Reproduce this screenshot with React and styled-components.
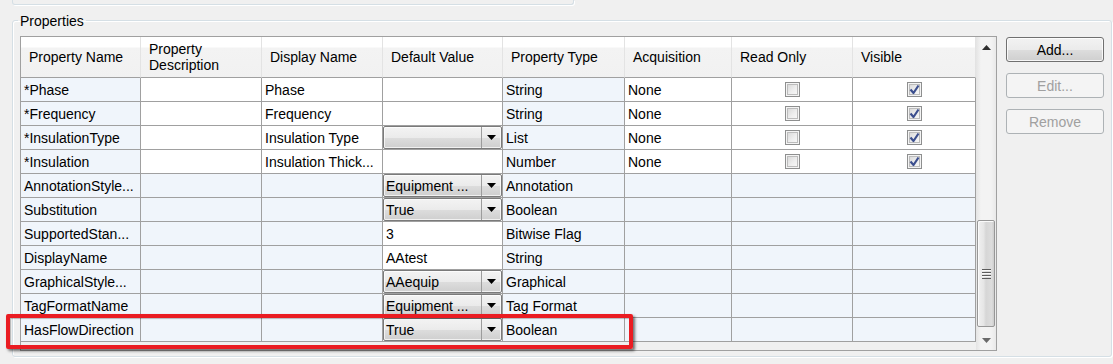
import React from "react";
import styled, { createGlobalStyle, css } from "styled-components";

const GlobalStyle = createGlobalStyle`
  html, body {
    margin: 0;
    padding: 0;
    background: #f0f0f0;
  }
`;

const Root = styled.div`
  position: relative;
  width: 1113px;
  height: 364px;
  overflow: hidden;
  background: #f0f0f0;
  font-family: "Liberation Sans", Arial, sans-serif;
  font-size: 14px;
  color: #000;
`;

const TopBox = styled.div`
  margin-left: 12px;
  width: 560px;
  height: 4px;
  border: 1px solid #d5dfe5;
  border-top: none;
  border-radius: 0 0 3px 3px;
  box-shadow: 1px 1px 0 #fff;
`;

const GroupBox = styled.fieldset`
  margin: 6px 1px 0 12px;
  padding: 7px 7px 5px 7px;
  border: 1px solid #d5dfe5;
  border-radius: 3px;
  min-width: 0;
  box-shadow: inset 1px 1px 0 #fff, 1px 1px 0 #fff;
`;

const Legend = styled.legend`
  margin-left: -2px;
  padding: 2px 2px 0;
  line-height: 16px;
  font-size: 14px;
  color: #000;
`;

const Body = styled.div`
  display: flex;
  align-items: flex-start;
`;

const GridControl = styled.div`
  display: flex;
  width: 977px;
  height: 315px;
  box-sizing: border-box;
  border: 1px solid #a0a0a0;
`;

const TableArea = styled.div`
  flex: 1;
  background: #f0f0f0;
`;

const Grid = styled.div`
  display: grid;
  grid-template-columns: 120px 121px 121px 120px 122px 107px 121px 123px;
  grid-template-rows: 41px;
  grid-auto-rows: 24px;
`;

const HeadCell = styled.div`
  display: flex;
  align-items: center;
  box-sizing: border-box;
  padding: 0 6px 0 8px;
  line-height: 16px;
  background: linear-gradient(#ffffff 0, #ffffff 10px, #f3f3f3 11px, #f1f1f1 100%);
  border-right: 1px solid #e3e3e3;
  border-bottom: 1px solid #a0a0a0;
  &:last-child {
    border-right-color: #a0a0a0;
  }
`;

const Cell = styled.div`
  display: flex;
  align-items: center;
  box-sizing: border-box;
  padding: 0 2px 0 3px;
  white-space: nowrap;
  overflow: hidden;
  background: ${p => (p.$blue ? "#f0f5fb" : "#ffffff")};
  border-right: 1px solid #a0a0a0;
  border-bottom: 1px solid #a0a0a0;
  ${p =>
    p.$center &&
    css`
      justify-content: center;
      padding: 0;
    `}
  ${p =>
    p.$fill &&
    css`
      padding: 0;
      align-items: stretch;
    `}
`;

const Combo = styled.div`
  flex: 1;
  display: flex;
  box-sizing: border-box;
  border: 1px solid #7a7a7a;
  border-radius: 2px;
  background: linear-gradient(#f3f3f3 0%, #ebebeb 50%, #dddddd 51%, #cfcfcf 100%);
  box-shadow: inset 0 0 0 1px rgba(255, 255, 255, 0.7);
`;

const ComboText = styled.span`
  flex: 1;
  display: flex;
  align-items: center;
  padding-left: 2px;
`;

const ComboButton = styled.span`
  width: 19px;
  display: flex;
  align-items: center;
  justify-content: center;
  border-left: 1px solid #9c9c9c;
`;

const Check = styled.span`
  width: 15px;
  height: 15px;
  box-sizing: border-box;
  border: 1px solid #8e8f8f;
  background: linear-gradient(135deg, #d3d3d3 0%, #eeeeee 55%, #fbfbfb 100%);
  box-shadow: inset 0 0 0 1px #f4f4f4, inset 0 0 0 2px #bcbcbc;
  display: flex;
  align-items: center;
  justify-content: center;
`;

const ScrollBar = styled.div`
  width: 20px;
  display: flex;
  flex-direction: column;
  background: linear-gradient(to right, #e4e4e4 0%, #f3f3f3 25%, #f3f3f3 75%, #e9e9e9 100%);
`;

const ArrowButton = styled.div`
  height: 20px;
  display: flex;
  align-items: center;
  justify-content: center;
`;

const Track = styled.div`
  flex: 1;
  display: flex;
  flex-direction: column;
`;

const Thumb = styled.div`
  margin: 163px 1px 0 1px;
  height: 107px;
  box-sizing: border-box;
  border: 1px solid #979797;
  border-radius: 2px;
  background: linear-gradient(to right, #f0f0f0 0%, #e6e6e6 35%, #d6d6d6 50%, #dddddd 85%, #cdcdcd 100%);
  box-shadow: inset 1px 1px 0 #fafafa;
  display: flex;
  align-items: center;
  justify-content: center;
`;

const ButtonCol = styled.div`
  display: flex;
  flex-direction: column;
  gap: 11px;
  margin-left: 9px;
  padding-top: 1px;
  width: 98px;
`;

const Button = styled.div`
  height: 25px;
  box-sizing: border-box;
  border-radius: 3px;
  display: flex;
  align-items: center;
  justify-content: center;
  border: 1px solid #707070;
  background: linear-gradient(#f2f2f2 0%, #ebebeb 50%, #dddddd 51%, #cfcfcf 100%);
  box-shadow: inset 0 0 0 1px rgba(255, 255, 255, 0.8);
  color: #000;
  ${p =>
    p.$disabled &&
    css`
      border-color: #adb2b5;
      background: #f4f4f4;
      box-shadow: none;
      color: #a0a0a0;
    `}
`;

const Highlight = styled.div`
  position: absolute;
  left: 6px;
  top: 314px;
  width: 627px;
  height: 35px;
  box-sizing: border-box;
  border: 4px solid #ea1c22;
  border-radius: 2px;
  box-shadow: 2px 2px 3px rgba(0, 0, 0, 0.55), inset 1px 1px 1px rgba(0, 0, 0, 0.25);
`;

const DownArrow = ({ color = "#000" }) => (
  <svg width="9" height="5" viewBox="0 0 9 5">
    <polygon points="0,0 9,0 4.5,5" fill={color} />
  </svg>
);

const CheckMark = () => (
  <svg width="11" height="11" viewBox="0 0 11 11">
    <path d="M1.5 5.5 L4.5 9 L9.5 1.5" fill="none" stroke="#3c4f8e" strokeWidth="2.2" strokeLinejoin="round" />
  </svg>
);

const Grip = () => (
  <svg width="9" height="10" viewBox="0 0 9 10">
    {[0, 3, 6, 9].map(y => (
      <rect key={y} x="0" y={y} width="9" height="1" fill="#5c5c5c" />
    ))}
    {[1, 4, 7].map(y => (
      <rect key={y} x="0" y={y} width="9" height="1" fill="#f8f8f8" />
    ))}
  </svg>
);

const columns = [
  "Property Name",
  "Property Description",
  "Display Name",
  "Default Value",
  "Property Type",
  "Acquisition",
  "Read Only",
  "Visible",
];

const rows = [
  { name: "*Phase", display: "Phase", def: { text: "" }, type: "String", acq: "None", ro: false, vis: true },
  { name: "*Frequency", display: "Frequency", def: { text: "" }, type: "String", acq: "None", ro: false, vis: true },
  { name: "*InsulationType", display: "Insulation Type", def: { combo: "" }, type: "List", acq: "None", ro: false, vis: true },
  { name: "*Insulation", display: "Insulation Thick...", def: { text: "" }, type: "Number", acq: "None", ro: false, vis: true },
  { name: "AnnotationStyle...", def: { combo: "Equipment ..." }, type: "Annotation" },
  { name: "Substitution", def: { combo: "True" }, type: "Boolean" },
  { name: "SupportedStan...", def: { text: "3" }, type: "Bitwise Flag" },
  { name: "DisplayName", def: { text: "AAtest" }, type: "String" },
  { name: "GraphicalStyle...", def: { combo: "AAequip" }, type: "Graphical" },
  { name: "TagFormatName", def: { combo: "Equipment ..." }, type: "Tag Format" },
  { name: "HasFlowDirection", def: { combo: "True" }, type: "Boolean" },
];

const CheckBox = ({ checked }) => <Check>{checked && <CheckMark />}</Check>;

const DataRow = ({ row }) => {
  const editable = row.name.startsWith("*");
  const other = !editable;
  return (
    <>
      <Cell $blue>{row.name}</Cell>
      <Cell $blue={other}></Cell>
      <Cell $blue={other}>{row.display}</Cell>
      {row.def.combo !== undefined ? (
        <Cell $fill>
          <Combo>
            <ComboText>{row.def.combo}</ComboText>
            <ComboButton>
              <DownArrow />
            </ComboButton>
          </Combo>
        </Cell>
      ) : (
        <Cell>{row.def.text}</Cell>
      )}
      <Cell $blue>{row.type}</Cell>
      <Cell $blue={other}>{row.acq}</Cell>
      <Cell $blue={other} $center>
        {editable && <CheckBox checked={row.ro} />}
      </Cell>
      <Cell $blue={other} $center>
        {editable && <CheckBox checked={row.vis} />}
      </Cell>
    </>
  );
};

const App = () => (
  <Root>
    <GlobalStyle />
    <TopBox />
    <GroupBox>
      <Legend>Properties</Legend>
      <Body>
        <GridControl>
          <TableArea>
            <Grid>
              {columns.map(c => (
                <HeadCell key={c}>{c}</HeadCell>
              ))}
              {rows.map(r => (
                <DataRow key={r.name} row={r} />
              ))}
            </Grid>
          </TableArea>
          <ScrollBar>
            <ArrowButton>
              <svg width="9" height="5" viewBox="0 0 9 5">
                <polygon points="0,5 9,5 4.5,0" fill="#2e2e2e" />
              </svg>
            </ArrowButton>
            <Track>
              <Thumb>
                <Grip />
              </Thumb>
            </Track>
            <ArrowButton>
              <DownArrow color="#6a6a6a" />
            </ArrowButton>
          </ScrollBar>
        </GridControl>
        <ButtonCol>
          <Button>Add...</Button>
          <Button $disabled>Edit...</Button>
          <Button $disabled>Remove</Button>
        </ButtonCol>
      </Body>
    </GroupBox>
    <Highlight />
  </Root>
);

export default App;
